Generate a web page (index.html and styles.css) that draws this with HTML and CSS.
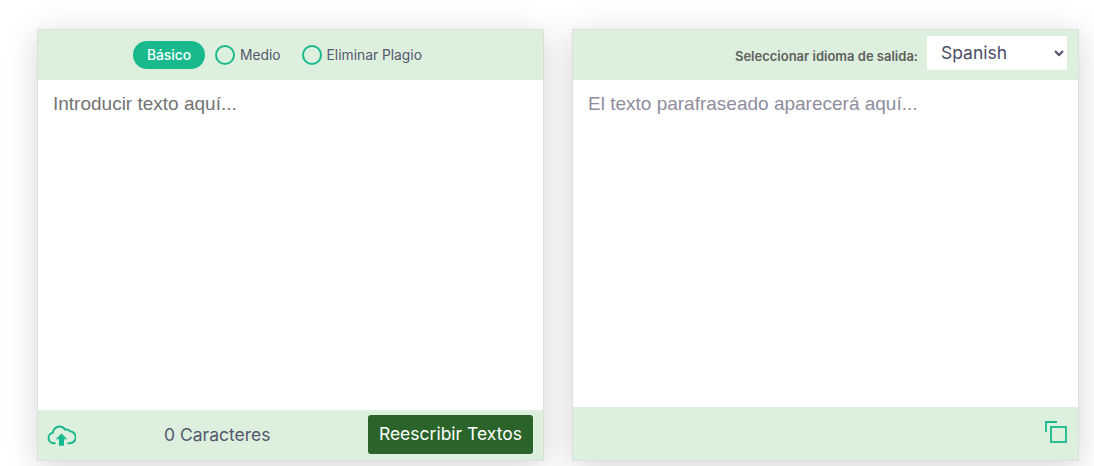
FILE: index.html
```html
<!DOCTYPE html>
<html lang="es">
<head>
  <meta charset="UTF-8">
  <title>Parafraseador</title>
  <link rel="stylesheet" href="styles.css">
</head>
<body>
  <div class="tool-row">
    <div class="panel">
      <div class="panel-head mode-list">
        <span class="mode-pill">Básico</span>
        <label class="mode-item"><span class="mode-radio"></span>Medio</label>
        <label class="mode-item"><span class="mode-radio"></span>Eliminar Plagio</label>
      </div>
      <div class="panel-body">
        <div class="placeholder dark">Introducir texto aquí...</div>
      </div>
      <div class="panel-foot input-foot">
        <svg class="upload-icon" width="29" height="22" viewBox="0 0 30 22" fill="none" stroke="#19b98e" stroke-width="2" stroke-linecap="round" stroke-linejoin="round">
          <path d="M8 19.5H7a5.500 5.500 0 0 1-.9-10.900A7 7 0 0 1 13 2.200c2.600 0 4.600 1.300 5.800 3.300a4 4 0 0 1 4.700 1.600 6 6 0 0 1 0 12.400H22"/>
          <path d="M15 9.500l6 6h-3.400V22h-5.200v-6.500H9z" fill="#19b98e" stroke="none"/>
        </svg>
        <span class="char-count">0 Caracteres</span>
        <button class="rewrite-btn">Reescribir Textos</button>
      </div>
    </div>
    <div class="panel">
      <div class="panel-head lang-bar">
        <span class="lang-label">Seleccionar idioma de salida:</span>
        <select class="lang-select">
          <option>Spanish</option>
        </select>
      </div>
      <div class="panel-body">
        <div class="placeholder">El texto parafraseado aparecerá aquí...</div>
      </div>
      <div class="panel-foot output-foot">
        <svg width="22" height="22" viewBox="0 0 22 22" fill="none" stroke="#19b98e" stroke-width="1.800">
          <path d="M1 11V1h11"/>
          <rect x="6" y="6" width="15" height="15"/>
        </svg>
      </div>
    </div>
  </div>
</body>
</html>
```

FILE: styles.css
```css
html, body {
  margin: 0;
  height: 466px;
  overflow: hidden;
  background: #fff;
  font-family: 'Inter', 'Roboto', Arial, sans-serif;
  color: #4a4d68;
}
.tool-row {
  display: flex;
  gap: 28.500px;
  padding: 29px 15px 5px 37px;
  height: 431.500px;
}
.panel {
  box-sizing: border-box;
  width: 506.500px;
  display: flex;
  flex-direction: column;
  background: #fff;
  border: 1px solid #dedede;
  box-shadow: 0 6px 30px rgba(0,0,0,0.17);
}
.panel-head {
  height: 50px;
  flex: none;
  display: flex;
  align-items: center;
  background: #ddefdd;
}
.panel-body {
  flex: 1;
  padding: 13px 15px;
}
.panel-foot {
  flex: none;
  display: flex;
  align-items: center;
  background: #ddefdd;
}
.placeholder {
  font-family: 'Liberation Sans', Arial, sans-serif;
  font-size: 19px;
  line-height: 22px;
  color: #8f8d9e;
}
.placeholder.dark {
  color: #737373;
}
.mode-list {
  padding-left: 95px;
  font-size: 13.800px;
}
.mode-pill {
  width: 72px;
  height: 28px;
  border-radius: 14px;
  background: #19b98e;
  color: #fff;
  font-weight: 500;
  display: flex;
  align-items: center;
  justify-content: center;
  margin-right: 10px;
}
.mode-item {
  display: flex;
  align-items: center;
  gap: 5px;
  margin-right: 21px;
  color: #55586f;
}
.mode-radio {
  width: 16px;
  height: 16px;
  border: 2px solid #19b98e;
  border-radius: 50%;
}
.input-foot {
  height: 50px;
  padding: 0 9.500px 0 8.500px;
  justify-content: space-between;
}
.char-count {
  font-size: 17.500px;
  color: #55586f;
  margin-left: -9px;
  margin-bottom: 1px;
}
.rewrite-btn {
  width: 165px;
  height: 39px;
  margin-bottom: 1px;
  border: 0;
  border-radius: 3px;
  background: #2a642a;
  color: #fff;
  font-family: inherit;
  font-size: 17.500px;
  padding: 0 0 2px;
}
.lang-bar {
  justify-content: flex-end;
  padding-right: 10.500px;
  align-items: flex-start;
}
.lang-label {
  font-size: 13px;
  font-weight: 600;
  color: #5d625d;
  margin-right: 9px;
  margin-top: 18px;
}
.lang-select {
  width: 140px;
  height: 34px;
  margin-top: 6px;
  border: 0;
  border-radius: 0;
  background: #fff;
  color: #4a4d68;
  font-family: inherit;
  font-size: 17.500px;
  padding: 0 0 2px 10px;
}
.output-foot {
  height: 53px;
  justify-content: flex-end;
  padding-right: 10.500px;
  padding-bottom: 3px;
  box-sizing: border-box;
}
```
